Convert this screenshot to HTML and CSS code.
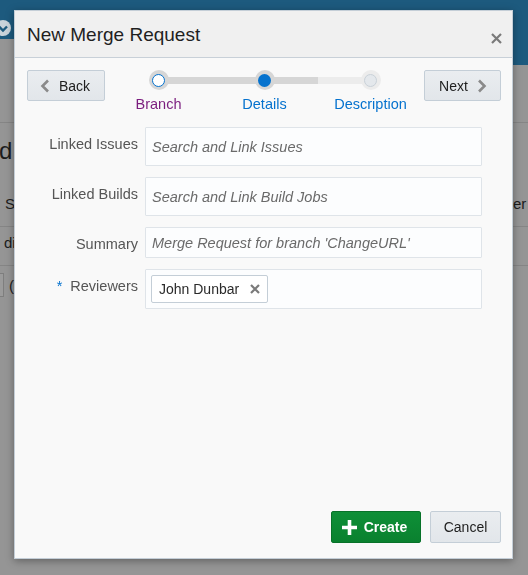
FILE: index.html
```html
<!DOCTYPE html>
<html>
<head>
<meta charset="utf-8">
<link rel="stylesheet" href="styles.css">
</head>
<body>
<div class="page">
  <div class="page-top">
    <div class="top-left">
      <div class="top-left-blue">
        <svg class="nav-icon" width="18" height="18" viewBox="0 0 18 18"><circle cx="9" cy="9" r="8" fill="#c9d3da"/><polyline points="5,7.5 9,11.5 13,7.5" fill="none" stroke="#1d5a7e" stroke-width="2.4"/></svg>
      </div>
      <div class="top-left-gray"></div>
    </div>
    <div class="top-right"></div>
  </div>
  <div class="page-body">
    <div class="rule rule-first"></div>
    <div class="page-title">d E</div>
    <div class="page-row"><span class="cell-s">S</span><span class="cell-filter">Filter</span></div>
    <div class="rule"></div>
    <div class="page-row2">di</div>
    <div class="rule"></div>
    <div class="page-row3"><span class="pbox"></span><span class="paren">(</span></div>
  </div>
</div>

<div class="dialog">
  <div class="dialog-header">
    <div class="dialog-title">New Merge Request</div>
    <svg class="close" width="11" height="11" viewBox="0 0 11 11"><path d="M1 1 L10 10 M10 1 L1 10" stroke="#7a7a7a" stroke-width="2.2"/></svg>
  </div>
  <div class="dialog-body">
    <div class="train-row">
      <button class="btn btn-back">
        <svg width="10" height="14" viewBox="0 0 10 14"><polyline points="8,1.5 2.5,7 8,12.5" fill="none" stroke="#8a8a8a" stroke-width="2.6"/></svg>
        <span>Back</span>
      </button>
      <div class="train">
        <div class="step step-visited">
          <div class="ring"><div class="dot"></div></div>
          <div class="step-label">Branch</div>
        </div>
        <div class="step step-current">
          <div class="ring"><div class="dot"></div></div>
          <div class="step-label">Details</div>
        </div>
        <div class="step step-next">
          <div class="ring"><div class="dot"></div></div>
          <div class="step-label">Description</div>
        </div>
      </div>
      <button class="btn btn-next">
        <span>Next</span>
        <svg width="10" height="14" viewBox="0 0 10 14"><polyline points="2,1.5 7.5,7 2,12.5" fill="none" stroke="#8a8a8a" stroke-width="2.6"/></svg>
      </button>
    </div>

    <div class="form">
      <div class="label">Linked Issues</div>
      <div class="field tall"><span class="ph">Search and Link Issues</span></div>

      <div class="label">Linked Builds</div>
      <div class="field tall"><span class="ph">Search and Link Build Jobs</span></div>

      <div class="label">Summary</div>
      <div class="field short"><span class="ph">Merge Request for branch 'ChangeURL'</span></div>

      <div class="label"><span class="req">*</span>Reviewers</div>
      <div class="field chips">
        <span class="chip">John Dunbar
          <svg width="10" height="10" viewBox="0 0 10 10"><path d="M1 1 L9 9 M9 1 L1 9" stroke="#7a7a7a" stroke-width="2.2"/></svg>
        </span>
      </div>
    </div>
  </div>
  <div class="dialog-footer">
    <button class="btn btn-create">
      <svg width="15" height="15" viewBox="0 0 15 15"><path d="M7.5 0 V15 M0 7.5 H15" stroke="#ffffff" stroke-width="3.6"/></svg>
      <span>Create</span>
    </button>
    <button class="btn btn-cancel"><span>Cancel</span></button>
  </div>
</div>
</body>
</html>
```

FILE: styles.css
```css
* { box-sizing: border-box; }
html, body { margin: 0; padding: 0; }
body {
  width: 528px;
  height: 575px;
  overflow: hidden;
  background: #959595;
  font-family: "Liberation Sans", Arial, sans-serif;
  color: #222;
}

/* background page (dimmed by modal) */
.page { width: 528px; }
.page-top { display: flex; height: 65px; }
.top-left { width: 40px; display: flex; flex-direction: column; }
.top-left-blue {
  height: 39px;
  background: #1d5a7e;
  display: flex;
  align-items: flex-end;
  padding-bottom: 2px;
}
.nav-icon { margin-left: -6px; }
.top-left-gray { flex: 1; background: #959595; }
.top-right { flex: 1; background: #1d5a7e; }
.page-body { display: flex; flex-direction: column; }
.rule { height: 1px; background: #858585; }
.rule-first { margin-top: 57px; }
.page-title {
  margin-top: 14px;
  margin-left: -1px;
  font-size: 24px;
  line-height: 28px;
  color: #1c1c1c;
}
.page-row {
  display: flex;
  margin-top: 30px;
  height: 17px;
  font-size: 15px;
  line-height: 17px;
  color: #1c1c1c;
}
.cell-s { margin-left: 5px; }
.cell-filter { margin-left: 478px; white-space: nowrap; }
.page-row + .rule { margin-top: 14px; }
.page-row2 {
  margin-top: 7px;
  margin-left: 4px;
  font-size: 15px;
  line-height: 17px;
  color: #1c1c1c;
}
.page-row2 + .rule { margin-top: 14px; }
.page-row3 { display: flex; align-items: center; margin-top: 7px; gap: 5px; color: #1c1c1c; font-size: 15px; }
.pbox {
  width: 4px;
  height: 24px;
  border: 1px solid #7e7e7e;
  border-left: none;
  background: #9b9b9b;
}

/* dialog */
.dialog {
  position: fixed;
  left: 14px;
  top: 10px;
  width: 499px;
  height: 549px;
  border: 1px solid #c4ced7;
  background: #f9f9f9;
  box-shadow: 0 2px 8px rgba(0, 0, 0, 0.35);
  display: flex;
  flex-direction: column;
}
.dialog-header {
  height: 47px;
  flex: none;
  background: #f0f0f0;
  border-bottom: 1px solid #c8d0d8;
  display: flex;
  align-items: center;
  padding: 0 10px 0 12px;
}
.dialog-title {
  font-size: 19px;
  line-height: 22px;
  color: #1f1f1f;
  margin-top: 1px;
}
.close { margin-left: auto; margin-top: 9px; }

.dialog-body { flex: 1; padding: 12px 11px 0 12px; }

.train-row { display: flex; align-items: flex-start; }
.btn {
  font-family: "Liberation Sans", Arial, sans-serif;
  font-size: 14px;
  color: #1e1e1e;
  height: 31px;
  border: 1px solid #c4ced7;
  border-radius: 2px;
  background: linear-gradient(#eaedf0, #e2e6ea);
  display: flex;
  align-items: center;
  justify-content: center;
  padding: 0;
  margin: 0;
}
.btn-back { width: 78px; gap: 9px; padding-right: 2px; }
.btn-next { width: 77px; gap: 9px; padding-left: 1px; }
.btn-back svg, .btn-next svg { display: block; }

.train {
  flex: 1;
  display: grid;
  grid-template-columns: repeat(3, 106px);
  justify-content: center;
}
.step {
  position: relative;
  display: flex;
  flex-direction: column;
  align-items: center;
}
.step + .step::before {
  content: "";
  position: absolute;
  top: 7px;
  height: 7px;
  left: -50%;
  right: 50%;
  background: #d6d6d6;
  z-index: 0;
}
.step-next::before { background: linear-gradient(to right, #d6d6d6 50%, #ececec 50%) !important; }
.ring {
  position: relative;
  z-index: 1;
  width: 20px;
  height: 20px;
  border-radius: 50%;
  background: #d6d6d6;
  display: flex;
  align-items: center;
  justify-content: center;
}
.dot { width: 13px; height: 13px; border-radius: 50%; }
.step-visited .dot { background: #fff; border: 1.5px solid #0572ce; }
.step-current .dot { background: #0572ce; }
.step-next .ring { background: #ececec; }
.step-next .dot { background: #e4e8ec; border: 1px solid #c9d1d8; }
.step-label {
  margin-top: 6px;
  font-size: 14.5px;
  line-height: 16px;
  color: #0572ce;
  white-space: nowrap;
}
.step-visited .step-label { color: #7b1d7e; }

.form {
  margin-top: 15px;
  display: grid;
  grid-template-columns: 111px 337px;
  column-gap: 7px;
  row-gap: 11px;
}
.label {
  text-align: right;
  font-size: 14.5px;
  line-height: 16px;
  padding-top: 9px;
  color: #555;
  white-space: nowrap;
}
.req { color: #0572ce; margin-right: 8px; }
.field {
  background: #fcfdfe;
  border: 1px solid #dfe4e9;
  border-radius: 1px;
  display: flex;
  align-items: center;
  padding: 0 6px;
}
.field.tall { height: 39px; }
.field.short { height: 31px; }
.field.chips { height: 40px; padding: 0 5px; }
.ph {
  font-style: italic;
  font-size: 14.5px;
  color: #6a6a6a;
  white-space: nowrap;
}
.chip {
  height: 28px;
  width: 117px;
  border: 1px solid #c4ced7;
  border-radius: 2px;
  background: #fff;
  display: flex;
  align-items: center;
  justify-content: space-between;
  padding: 0 7px 0 7px;
  font-size: 14px;
  color: #2a2a2a;
}

.dialog-footer {
  flex: none;
  display: flex;
  justify-content: flex-end;
  gap: 9px;
  padding: 0 11px 15px 0;
}
.btn-create {
  width: 90px;
  height: 32px;
  gap: 7px;
  padding-right: 3px;
  background: linear-gradient(#0e8f37, #0a812f);
  border-color: #087229;
  color: #fff;
  font-weight: bold;
}
.btn-cancel { width: 71px; height: 32px; }
```
